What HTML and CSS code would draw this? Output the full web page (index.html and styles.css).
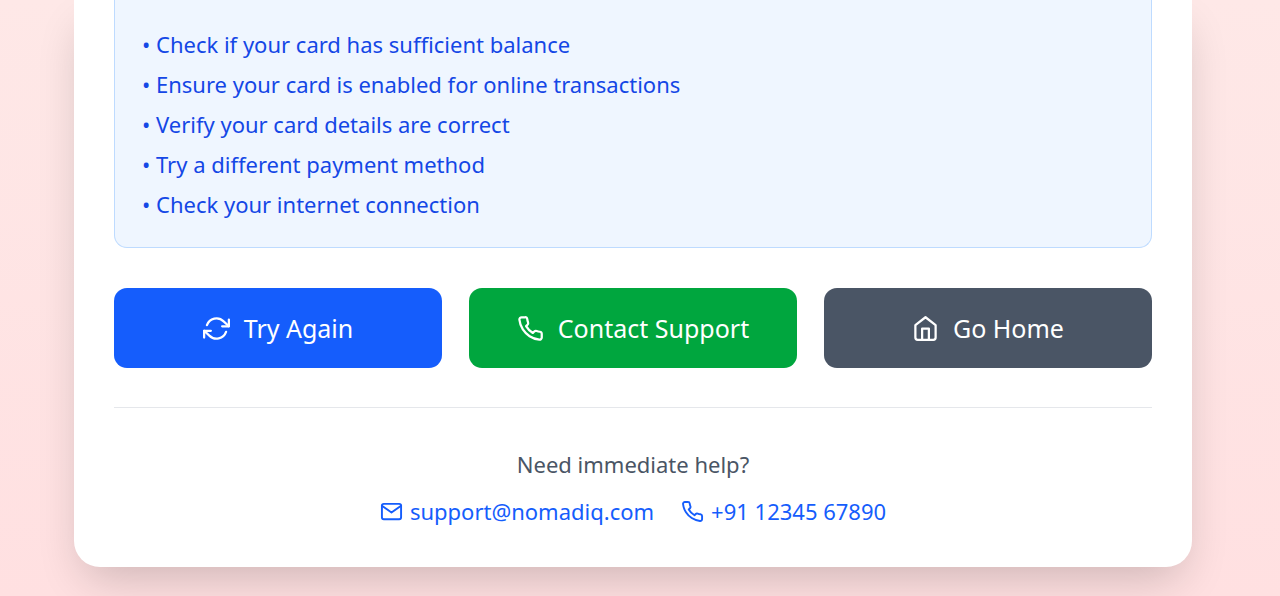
FILE: index.html
```html
<!DOCTYPE html>
<html lang="en">
<head>
<meta charset="utf-8">
<meta name="viewport" content="width=device-width, initial-scale=1">
<title>Payment Failed</title>
<link rel="stylesheet" href="styles.css">
</head>
<body>
<main class="page">
  <section class="card">
    <div class="tips">
      <ul class="tips-list">
        <li>• Check if your card has sufficient balance</li>
        <li>• Ensure your card is enabled for online transactions</li>
        <li>• Verify your card details are correct</li>
        <li>• Try a different payment method</li>
        <li>• Check your internet connection</li>
      </ul>
    </div>
    <div class="actions">
      <button class="btn btn-retry" type="button">
        <svg class="icon" viewBox="0 0 24 24" aria-hidden="true"><path d="M23 4v6h-6M1 20v-6h6"/><path d="M3.51 9a9 9 0 0 1 14.85-3.36L23 10M1 14l4.64 4.36A9 9 0 0 0 20.49 15"/></svg>
        <span>Try Again</span>
      </button>
      <button class="btn btn-support" type="button">
        <svg class="icon" viewBox="0 0 24 24" aria-hidden="true"><path d="M22 16.92v3a2 2 0 0 1-2.18 2 19.79 19.79 0 0 1-8.63-3.07 19.5 19.5 0 0 1-6-6 19.79 19.79 0 0 1-3.07-8.67A2 2 0 0 1 4.11 2h3a2 2 0 0 1 2 1.72 12.84 12.84 0 0 0 .7 2.81 2 2 0 0 1-.45 2.11L8.09 9.91a16 16 0 0 0 6 6l1.27-1.27a2 2 0 0 1 2.11-.45 12.84 12.84 0 0 0 2.81.7A2 2 0 0 1 22 16.92z"/></svg>
        <span>Contact Support</span>
      </button>
      <button class="btn btn-home" type="button">
        <svg class="icon" viewBox="0 0 24 24" aria-hidden="true"><path d="M3 9l9-7 9 7v11a2 2 0 0 1-2 2H5a2 2 0 0 1-2-2z"/><path d="M9 22V12h6v10"/></svg>
        <span>Go Home</span>
      </button>
    </div>
    <footer class="help">
      <p class="help-title">Need immediate help?</p>
      <div class="contacts">
        <a class="contact" href="mailto:support@nomadiq.com">
          <svg class="icon icon-small" viewBox="0 0 24 24" aria-hidden="true"><path d="M4 4h16c1.1 0 2 .9 2 2v12c0 1.1-.9 2-2 2H4c-1.1 0-2-.9-2-2V6c0-1.1.9-2 2-2z"/><path d="M22 6l-10 7L2 6"/></svg>
          <span>support@nomadiq.com</span>
        </a>
        <a class="contact" href="tel:+911234567890">
          <svg class="icon icon-small" viewBox="0 0 24 24" aria-hidden="true"><path d="M22 16.92v3a2 2 0 0 1-2.18 2 19.79 19.79 0 0 1-8.63-3.07 19.5 19.5 0 0 1-6-6 19.79 19.79 0 0 1-3.07-8.67A2 2 0 0 1 4.11 2h3a2 2 0 0 1 2 1.72 12.84 12.84 0 0 0 .7 2.81 2 2 0 0 1-.45 2.11L8.09 9.91a16 16 0 0 0 6 6l1.27-1.27a2 2 0 0 1 2.11-.45 12.84 12.84 0 0 0 2.81.7A2 2 0 0 1 22 16.92z"/></svg>
          <span>+91 12345 67890</span>
        </a>
      </div>
    </footer>
  </section>
</main>
</body>
</html>
```

FILE: styles.css
```css
* {
  box-sizing: border-box;
}

body {
  margin: 0;
  font-family: "Segoe UI", "Noto Sans", sans-serif;
  font-size: 22px;
  line-height: 33px;
}

.page {
  min-height: 100vh;
  padding: 0 88px 29px 74px;
  background: linear-gradient(#fee8e7, #ffe0e1);
  overflow: hidden;
}

.card {
  padding: 0 40px 39px;
  background: #fff;
  border-radius: 0 0 26px 26px;
  box-shadow: 0 20px 46px -10px rgba(0, 0, 0, 0.2);
}

.tips {
  padding: 28px 27px 26px;
  background: #eff6ff;
  border: 1px solid #bedbff;
  border-top: 0;
  border-radius: 0 0 13px 13px;
}

.tips-list {
  display: grid;
  gap: 7px;
  margin: 0;
  padding: 0;
  list-style: none;
  color: #1447e6;
}

.actions {
  display: grid;
  grid-template-columns: repeat(3, 1fr);
  gap: 27px;
  margin-top: 40px;
}

.btn {
  display: flex;
  align-items: center;
  justify-content: center;
  gap: 14px;
  padding: 20px;
  border: 0;
  border-radius: 13px;
  color: #fff;
  font-family: inherit;
  font-size: 25px;
  line-height: 40px;
  cursor: pointer;
}

.btn-retry {
  background: #155dfc;
}

.btn-support {
  background: #00a63e;
}

.btn-home {
  background: #4a5565;
}

.icon {
  flex: none;
  width: 27px;
  height: 27px;
  fill: none;
  stroke: currentColor;
  stroke-width: 2;
  stroke-linecap: round;
  stroke-linejoin: round;
}

.icon-small {
  width: 23px;
  height: 23px;
}

.help {
  margin-top: 39px;
  padding-top: 40px;
  border-top: 1px solid #e5e7eb;
  text-align: center;
}

.help-title {
  margin: 0 0 14px;
  color: #4a5565;
}

.contacts {
  display: flex;
  justify-content: center;
  gap: 27px;
}

.contact {
  display: flex;
  align-items: center;
  gap: 7px;
  color: #155dfc;
  text-decoration: none;
}
```
